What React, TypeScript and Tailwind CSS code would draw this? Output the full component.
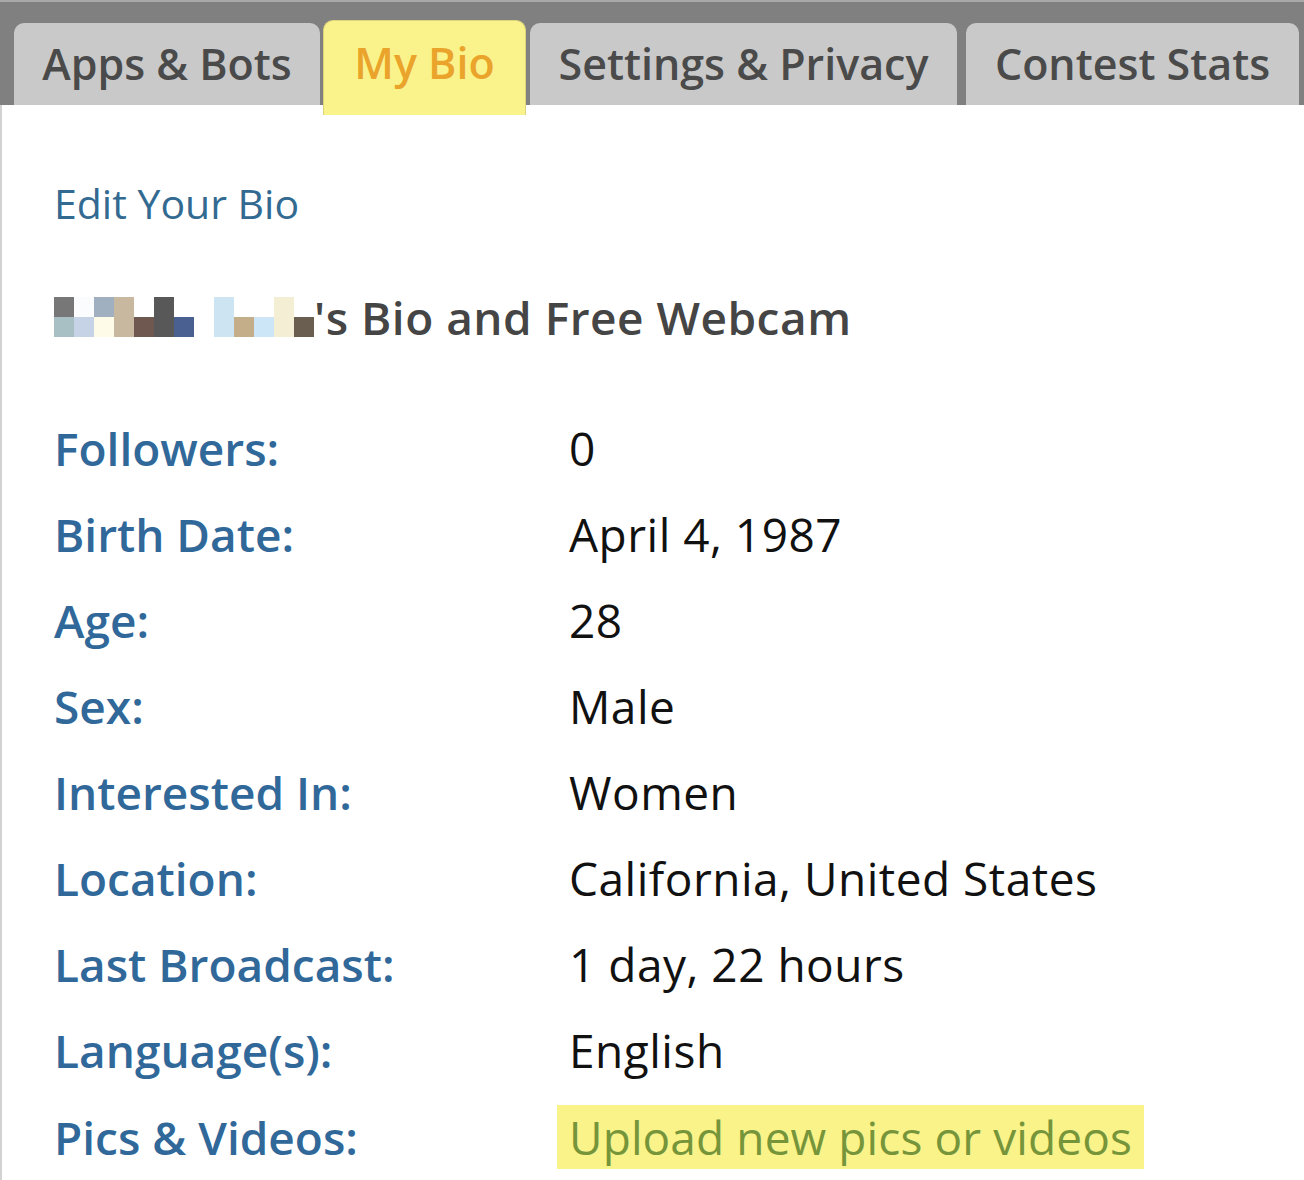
const font = { fontFamily: '"Open Sans", Lato, sans-serif' }

const tabs = [
  { label: 'Apps & Bots', w: 'w-[306px]', active: false },
  { label: 'My Bio', w: 'w-[203px]', active: true },
  { label: 'Settings & Privacy', w: 'w-[427px]', active: false },
  { label: 'Contest Stats', w: 'w-[333px]', active: false },
]

// pixelated (censored) name: [top, bottom] per 20px column
const pixels: [string, string][] = [
  ['bg-[#777777]', 'bg-[#a8c0c4]'],
  ['bg-[#fafcfd]', 'bg-[#c6d3e6]'],
  ['bg-[#a0b0c0]', 'bg-[#fefbe8]'],
  ['bg-[#c8b89f]', 'bg-[#c8b89f]'],
  ['bg-white', 'bg-[#6e5850]'],
  ['bg-[#585858]', 'bg-[#585858]'],
  ['bg-white', 'bg-[#4a6090]'],
  ['bg-white', 'bg-white'],
  ['bg-[#cde4f2]', 'bg-[#cde4f2]'],
  ['bg-white', 'bg-[#c4ae8a]'],
  ['bg-white', 'bg-[#cce6f8]'],
  ['bg-[#f4eed4]', 'bg-[#f4eed4]'],
  ['bg-white', 'bg-[#6a5e50]'],
]

const rows = [
  ['Followers:', '0'],
  ['Birth Date:', 'April 4, 1987'],
  ['Age:', '28'],
  ['Sex:', 'Male'],
  ['Interested In:', 'Women'],
  ['Location:', 'California, United States'],
  ['Last Broadcast:', '1 day, 22 hours'],
  ['Language(s):', 'English'],
]

export default function App() {
  return (
    <div className="w-[1304px] h-[1180px] bg-white overflow-hidden" style={font}>
      {/* Tab bar */}
      <div className="h-[105px] bg-[#808080] border-t-2 border-[#a9a9a9] pl-[14px] flex items-end">
        {tabs.map((t, i) => (
          <div
            key={t.label}
            className={`${t.w} flex items-center justify-center rounded-t-[10px] text-[43px] font-semibold whitespace-nowrap ${
              i === 1 ? 'ml-[3px]' : i === 2 ? 'ml-[4px]' : i === 3 ? 'ml-[9px]' : ''
            } ${
              t.active
                ? 'h-[95px] -mb-[10px] pb-[10px] relative z-10 bg-[#faf38b] border border-[#dcd47a] border-b-0 rounded-t-[6px] text-[#eaa42b]'
                : 'h-[82px] bg-[#c9c9c9] text-[#4a4a4a]'
            }`}
          >
            {t.label}
          </div>
        ))}
      </div>

      {/* Content */}
      <div className="h-[1075px] border-l-2 border-[#d2d2d2] pl-[52px]">
        <p className="pt-[74px] text-[41px] leading-[48px] text-[#336a92]">Edit Your Bio</p>

        <div className="mt-[64px] flex items-center">
          <div className="flex">
            {pixels.map(([a, b], i) => (
              <div key={i} className="flex flex-col">
                <div className={`w-[20px] h-[20px] ${a}`} />
                <div className={`w-[20px] h-[20px] ${b}`} />
              </div>
            ))}
          </div>
          <h1 className="text-[46px] leading-[52px] font-semibold tracking-[0.5px] text-[#454545]">'s Bio and Free Webcam</h1>
        </div>

        <div className="mt-[62px] flex flex-col">
          {rows.map(([k, v]) => (
            <div key={k} className="h-[86px] flex items-center">
              <div className="w-[515px] text-[46px] font-semibold text-[#31689a]">{k}</div>
              <div className="text-[46px] tracking-[0.5px] text-[#111111]">{v}</div>
            </div>
          ))}
          <div className="h-[86px] flex items-center pt-[2px]">
            <div className="w-[503px] text-[46px] font-semibold text-[#31689a]">Pics &amp; Videos:</div>
            <div className="h-[64px] px-[12px] flex items-center bg-[#f9f38a] text-[46px] tracking-[0.1px] text-[#76953a]">
              Upload new pics or videos
            </div>
          </div>
        </div>
      </div>
    </div>
  )
}
